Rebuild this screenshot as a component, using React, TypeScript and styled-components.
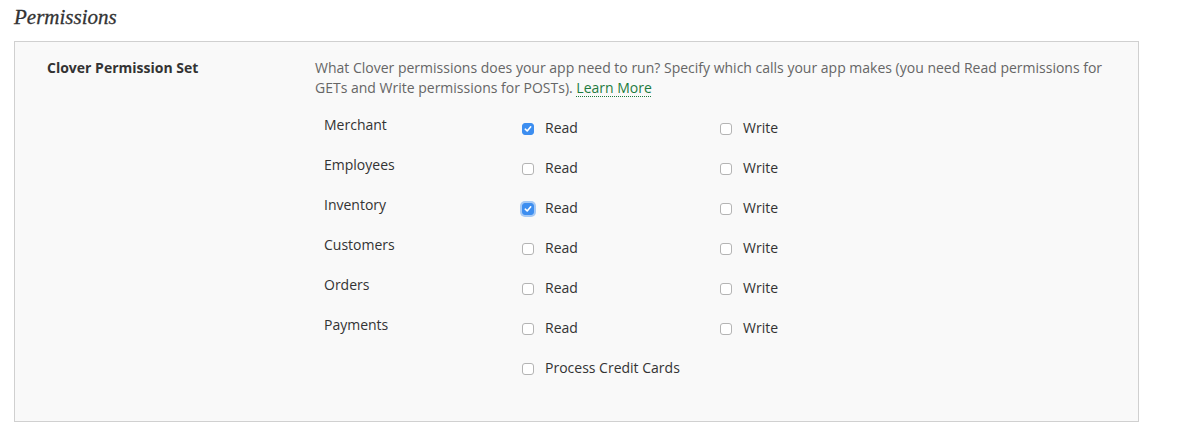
import React from "react"
import styled, { createGlobalStyle } from "styled-components"

const GlobalStyle = createGlobalStyle`
    html, body {
        margin: 0;
        padding: 0;
        background: #fff;
    }
    body {
        font-family: "Open Sans", "Liberation Sans", sans-serif;
        font-size: 14px;
        line-height: 20px;
        color: #333;
    }
`

const SCxPage = styled.div`
    width: 1125px;
    padding: 0 14px;
`

const SCxTitle = styled.h2`
    margin: 0;
    padding-top: 4px;
    height: 37px;
    font-family: "Liberation Serif", "DejaVu Serif", serif;
    font-style: italic;
    font-weight: normal;
    font-size: 21px;
    line-height: 26px;
    color: #333;
    -webkit-text-stroke: 0.3px #333;
`

const SCxPanel = styled.div`
    display: grid;
    grid-template-columns: 268px 1fr;
    padding: 16px 28px 33px 32px;
    background: #f9f9f9;
    border: 1px solid #d0d0d0;
`

const SCxFieldLabel = styled.div`
    font-weight: 700;
    color: #333;
`

const SCxDescription = styled.p`
    margin: 0 0 10px;
    color: #666;
`

const SCxLink = styled.a`
    display: inline-block;
    line-height: 18px;
    color: #1e7b3e;
    text-decoration: none;
    background-image: linear-gradient(to right, #1e7b3e 50%, transparent 50%);
    background-size: 2px 1px;
    background-repeat: repeat-x;
    background-position: 0 100%;
`

const SCxGrid = styled.div`
    display: grid;
    grid-template-columns: 198px 198px 198px;
    grid-auto-rows: 40px;
    padding-left: 9px;
`

const SCxRowLabel = styled.div`
    padding-top: 7px;
    color: #333;
`

const SCxOption = styled.label`
    display: flex;
    align-items: flex-start;
    gap: 11px;
    padding-top: 10px;
    color: #333;
`

const SCxBox = styled.span<{ $checked?: boolean; $focused?: boolean }>`
    box-sizing: border-box;
    width: 12px;
    height: 12px;
    margin-top: 5px;
    flex: none;
    border-radius: 3px;
    display: flex;
    align-items: center;
    justify-content: center;
    background: ${p => (p.$checked ? "#3d8ef0" : "#fff")};
    border: 1px solid ${p => (p.$checked ? "#3d8ef0" : "#b4b4b4")};
    box-shadow: ${p => (p.$focused ? "0 0 0 2px rgba(61, 142, 240, 0.45)" : "none")};
`

interface CheckProps {
    label: string
    checked?: boolean
    focused?: boolean
}

const Check: React.FC<CheckProps> = ({ label, checked, focused }) => (
    <SCxOption>
        <SCxBox $checked={checked} $focused={focused}>
            {checked && (
                <svg width="8" height="8" viewBox="0 0 8 8">
                    <path d="M1.3 4.2 L3.2 6 L6.7 1.8" fill="none" stroke="#fff" strokeWidth="1.6" strokeLinecap="round" strokeLinejoin="round" />
                </svg>
            )}
        </SCxBox>
        {label}
    </SCxOption>
)

const rows = [
    { name: "Merchant", read: true },
    { name: "Employees" },
    { name: "Inventory", read: true, focused: true },
    { name: "Customers" },
    { name: "Orders" },
    { name: "Payments" }
]

export default function App() {
    return (
        <SCxPage>
            <GlobalStyle />
            <SCxTitle>Permissions</SCxTitle>
            <SCxPanel>
                <SCxFieldLabel>Clover Permission Set</SCxFieldLabel>
                <div>
                    <SCxDescription>
                        What Clover permissions does your app need to run? Specify which calls your app makes (you need Read permissions for
                        GETs and Write permissions for POSTs). <SCxLink href="#">Learn More</SCxLink>
                    </SCxDescription>
                    <SCxGrid>
                        {rows.map(row => (
                            <React.Fragment key={row.name}>
                                <SCxRowLabel>{row.name}</SCxRowLabel>
                                <Check label="Read" checked={row.read} focused={row.focused} />
                                <Check label="Write" />
                            </React.Fragment>
                        ))}
                        <div />
                        <Check label="Process Credit Cards" />
                    </SCxGrid>
                </div>
            </SCxPanel>
        </SCxPage>
    )
}
